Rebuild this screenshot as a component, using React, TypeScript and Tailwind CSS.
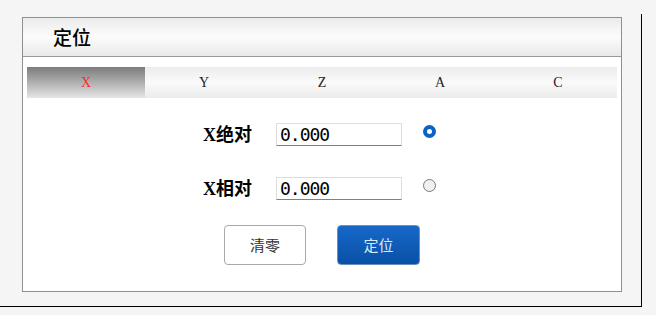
import { useState } from "react";

const tabs = ["X", "Y", "Z", "A", "C"];

export default function App() {
  const [active, setActive] = useState(0);
  const [mode, setMode] = useState("abs");

  return (
    <div className="h-[315px] w-[656px] overflow-hidden bg-[#f5f5f5] pt-[14px] font-['Noto_Sans_CJK_SC',sans-serif]">
      <div className="h-[293px] w-[642px] border-r border-b border-black pt-[3px]">
        <div className="ml-[22px] h-[275px] w-[600px] border border-[#8f8f8f] bg-white">
          {/* Header */}
          <div className="flex h-[39px] items-center border-b border-[#999] bg-gradient-to-b from-[#ebebeb] via-[#fcfcfc] to-[#e9e9e9] pl-[30px] text-[19px] font-medium text-black">
            定位
          </div>

          {/* Axis tabs */}
          <div className="px-[4px] pt-[10px]">
            <div className="grid h-[31px] grid-cols-5">
              {tabs.map((t, i) => (
                <button
                  key={t}
                  onClick={() => setActive(i)}
                  className={
                    i === active
                      ? "flex items-center justify-center bg-gradient-to-b from-[#7c7c7c] to-[#e6e6e6] font-['Liberation_Serif',serif] text-[14px] text-[#ff2a2a]"
                      : "flex items-center justify-center bg-gradient-to-b from-[#ececec] via-[#fafafa] to-[#ebebeb] font-['Liberation_Serif',serif] text-[14px] text-[#222]"
                  }
                >
                  {t}
                </button>
              ))}
            </div>
          </div>

          {/* Position fields */}
          <div className="ml-[180px] mt-[25px] flex flex-col gap-[31px]">
            {[
              { key: "abs", label: "X绝对" },
              { key: "rel", label: "X相对" },
            ].map((row) => (
              <div key={row.key} className="flex h-[23px] items-center">
                <span className="w-[51px] whitespace-nowrap font-['Liberation_Serif','Noto_Sans_CJK_SC',serif] text-[18px] font-bold leading-none text-black">
                  {row.label}
                </span>
                <div className="ml-[22px] flex h-[23px] w-[126px] items-center border border-[#ddd] border-b-[#808080] pl-[3px] font-['DejaVu_Sans_Mono',monospace] text-[18px] tracking-[-1px] text-black">
                  0.000
                </div>
                <button
                  onClick={() => setMode(row.key)}
                  className={
                    mode === row.key
                      ? "ml-[21px] mb-[7px] h-[13px] w-[13px] rounded-full border-[4px] border-[#0b62c2] bg-white"
                      : "ml-[21px] mb-[7px] h-[13px] w-[13px] rounded-full border border-[#7a7a7a] bg-[#f0f0f0]"
                  }
                />
              </div>
            ))}
          </div>

          {/* Actions */}
          <div className="mt-[25px] flex justify-center gap-[31px]">
            <button className="h-[40px] w-[82px] rounded-[4px] border border-[#a9a9a9] bg-white text-[15px] text-[#333]">
              清零
            </button>
            <button className="h-[40px] w-[83px] rounded-[4px] border border-[#6b8fbf] bg-gradient-to-b from-[#1768c9] to-[#0950a6] text-[15px] text-[#dbe8f7]">
              定位
            </button>
          </div>
        </div>
      </div>
    </div>
  );
}
